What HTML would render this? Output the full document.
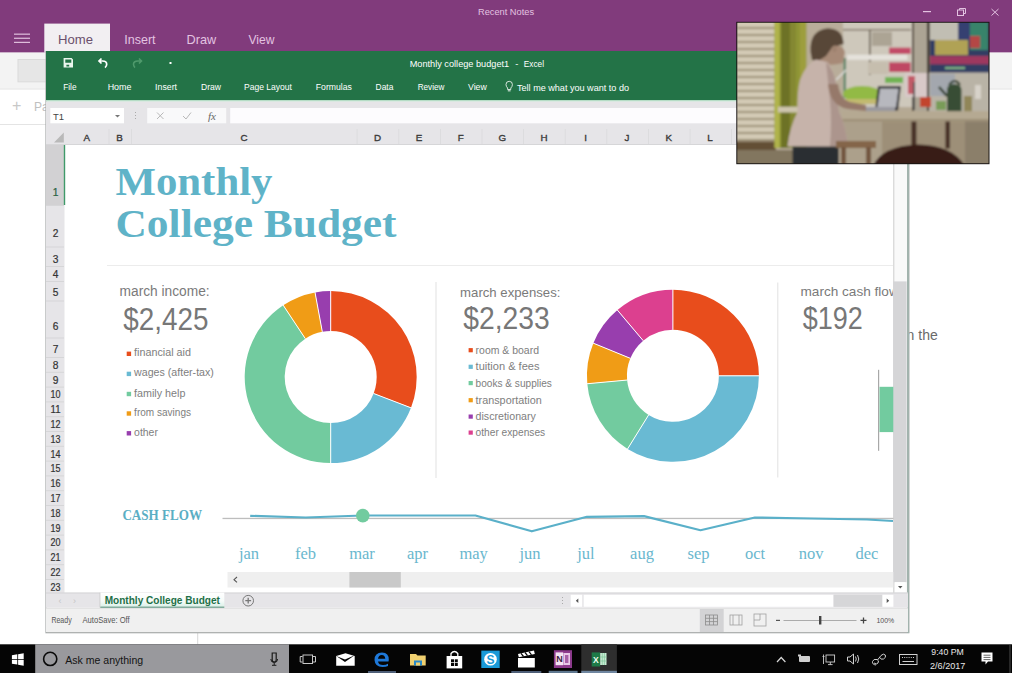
<!DOCTYPE html>
<html><head><meta charset="utf-8">
<style>
html,body{margin:0;padding:0;width:1012px;height:673px;overflow:hidden;background:#fff;}
svg{display:block;}
text{font-family:"Liberation Sans",sans-serif;}
.serif,.serif text{font-family:"Liberation Serif",serif;}
</style></head>
<body>
<svg width="1012" height="673" viewBox="0 0 1012 673">
<defs>
  <filter id="blur1" x="-5%" y="-5%" width="110%" height="110%"><feGaussianBlur stdDeviation="1.0"/></filter>
  <linearGradient id="tabgrad" x1="0" y1="0" x2="0" y2="1"><stop offset="0" stop-color="#ffffff"/><stop offset="0.55" stop-color="#f6fbf9"/><stop offset="1" stop-color="#d6efe5"/></linearGradient>
  <filter id="soft" x="-5%" y="-5%" width="110%" height="110%"><feGaussianBlur stdDeviation="0.4"/></filter>
</defs>

<!-- ===== OneNote background ===== -->
<rect x="0" y="0" width="1012" height="673" fill="#ffffff"/>
<rect x="0" y="0" width="1012" height="52.6" fill="#813b7c"/>
<text x="478" y="15.3" font-size="9.6" fill="#e3c3e1" textLength="56" lengthAdjust="spacingAndGlyphs">Recent Notes</text>
<!-- window controls -->
<rect x="923" y="11" width="8" height="1.2" fill="#e3c3e1"/>
<g fill="none" stroke="#e3c3e1" stroke-width="1">
  <rect x="957.5" y="10" width="6" height="5.5"/>
  <path d="M959.5 10 V8.5 H965.5 V13.5 H963.5"/>
  <path d="M991.5 9 L998.5 15.5 M998.5 9 L991.5 15.5"/>
</g>
<!-- hamburger -->
<g fill="#e8cce6">
  <rect x="14" y="33.6" width="16" height="1.1"/>
  <rect x="14" y="37.7" width="16" height="1.1"/>
  <rect x="14" y="41.8" width="16" height="1.1"/>
</g>
<!-- Home tab -->
<rect x="44.3" y="23.6" width="65.7" height="29" fill="#f2eff2"/>
<text x="58" y="43.6" font-size="13.5" fill="#6b4f6c" textLength="35" lengthAdjust="spacingAndGlyphs">Home</text>
<text x="124.3" y="43.6" font-size="13.5" fill="#e3c3e1" textLength="31.3" lengthAdjust="spacingAndGlyphs">Insert</text>
<text x="186.5" y="43.6" font-size="13.5" fill="#e3c3e1" textLength="29.7" lengthAdjust="spacingAndGlyphs">Draw</text>
<text x="248.5" y="43.6" font-size="13.5" fill="#e3c3e1" textLength="26" lengthAdjust="spacingAndGlyphs">View</text>

<!-- OneNote ribbon below -->
<rect x="0" y="52.6" width="1012" height="36" fill="#f3f3f3"/>
<rect x="0" y="88.5" width="1012" height="1" fill="#e2e2e2"/>
<rect x="18" y="59.5" width="40" height="22.3" fill="#e6e6e6" stroke="#dadada" stroke-width="1"/>
<text x="12" y="111" font-size="16" fill="#c8c8c8">+</text>
<text x="34" y="110.5" font-size="12" fill="#c0c0c0">Pa</text>
<rect x="0" y="124" width="46" height="1" fill="#e4e4e4"/>
<!-- OneNote page text right -->
<text x="903.5" y="339.8" font-size="14" fill="#6a6a6a">in the</text>
<rect x="197.2" y="632" width="1" height="13" fill="#d8d8d8"/>

<!-- ===== Excel window ===== -->
<g id="excel">
  <!-- shadow/border -->
  <rect x="45.4" y="51" width="864" height="582.3" fill="#a6aaa9"/>
  <rect x="907" y="51" width="2.1" height="582" fill="#a2b3ad"/>
  <rect x="46.6" y="51" width="860.4" height="581.1" fill="#ffffff"/>
  <!-- green ribbon -->
  <rect x="46" y="51" width="862" height="49" fill="#237347"/>
  <!-- QAT icons -->
  <g fill="#ffffff">
    <!-- save -->
    <path d="M63.6 58 H71.6 L73 59.4 V67.4 H63.6 Z M65.3 59.4 V62.8 H71.3 V59.4 Z M66.4 64.7 V66.4 H69.2 V64.7 Z" fill-rule="evenodd" fill="#eaf6ee"/>
  </g>
  <path d="M99 61 H102.5 Q106.7 61 106.7 64.3 Q106.7 66.3 105 67.6 M101.5 58.5 L99 61 L101.5 63.5" fill="none" stroke="#ffffff" stroke-width="1.7"/>
  <path d="M141.5 61 H138 Q133.5 61 133.5 64.3 Q133.5 66.3 135 67.6 M139 58.5 L141.5 61 L139 63.5" fill="none" stroke="#4f9a6c" stroke-width="1.6"/>
  <rect x="169.5" y="62" width="2" height="2" fill="#ffffff"/>
  <text x="409.7" y="67.2" font-size="9.2" fill="#ffffff" textLength="99.5" lengthAdjust="spacingAndGlyphs">Monthly college budget1</text><text x="515.2" y="67.2" font-size="9.2" fill="#ffffff">-</text><text x="523.8" y="67.2" font-size="9.2" fill="#ffffff" textLength="20.2" lengthAdjust="spacingAndGlyphs">Excel</text>
  <g font-size="9.2" fill="#ffffff">
    <text x="63.2" y="90" textLength="13.3" lengthAdjust="spacingAndGlyphs">File</text>
    <text x="107.7" y="90" textLength="23.7" lengthAdjust="spacingAndGlyphs">Home</text>
    <text x="155.1" y="90" textLength="21.9" lengthAdjust="spacingAndGlyphs">Insert</text>
    <text x="201" y="90" textLength="20" lengthAdjust="spacingAndGlyphs">Draw</text>
    <text x="244" y="90" textLength="48" lengthAdjust="spacingAndGlyphs">Page Layout</text>
    <text x="315.8" y="90" textLength="36.1" lengthAdjust="spacingAndGlyphs">Formulas</text>
    <text x="375.6" y="90" textLength="17.8" lengthAdjust="spacingAndGlyphs">Data</text>
    <text x="417.7" y="90" textLength="26.7" lengthAdjust="spacingAndGlyphs">Review</text>
    <text x="468" y="90" textLength="18.8" lengthAdjust="spacingAndGlyphs">View</text>
    <text x="517" y="90.5" textLength="112" lengthAdjust="spacingAndGlyphs">Tell me what you want to do</text>
  </g>
  <!-- lightbulb -->
  <path d="M507.6 88 Q506 86.5 506 84.5 A3.2 3.2 0 0 1 512.4 84.5 Q512.4 86.5 510.8 88 V89.5 H507.6 Z" fill="none" stroke="#ffffff" stroke-width="0.8"/>
  <rect x="507.8" y="90.4" width="2.8" height="0.9" fill="#fff"/>

  <!-- formula bar area -->
  <rect x="46" y="100" width="862" height="1.6" fill="#b5dcc5"/>
  <rect x="46" y="101.6" width="862" height="43" fill="#e6e5e8"/>
  <rect x="50.3" y="108" width="73.7" height="15.3" fill="#ffffff"/>
  <text x="53" y="119.8" font-size="9.5" fill="#444">T1</text>
  <path d="M115 115 H120 L117.5 117.5 Z" fill="#777"/>
  <g fill="#aaa"><rect x="135" y="112" width="1" height="1"/><rect x="135" y="115" width="1" height="1"/><rect x="135" y="118" width="1" height="1"/></g>
  <rect x="147.2" y="108" width="79" height="15.3" fill="#f9f9fa"/>
  <path d="M157 112.5 L163.5 119 M163.5 112.5 L157 119" stroke="#b8b8b8" stroke-width="1"/>
  <path d="M183 116 L186 119 L191 112.5" fill="none" stroke="#b8b8b8" stroke-width="1"/>
  <text x="208" y="119.8" font-size="11" fill="#666" class="serif" font-style="italic">fx</text>
  <rect x="230.2" y="108" width="663" height="15.3" fill="#fdfcfe"/>

  <!-- column header row -->
  <rect x="46" y="144" width="847" height="1" fill="#d6d6d8"/>
  <path d="M54 142.4 L63.8 132.6 V142.4 Z" fill="#b9b9b9"/>
  <g fill="#dcdcde">
    <rect x="108.5" y="129" width="1" height="15"/>
    <rect x="131" y="129" width="1" height="15"/>
    <rect x="356.6" y="129" width="1" height="15"/>
    <rect x="398.3" y="129" width="1" height="15"/>
    <rect x="440" y="129" width="1" height="15"/>
    <rect x="481.5" y="129" width="1" height="15"/>
    <rect x="523" y="129" width="1" height="15"/>
    <rect x="564.7" y="129" width="1" height="15"/>
    <rect x="606.3" y="129" width="1" height="15"/>
    <rect x="648" y="129" width="1" height="15"/>
    <rect x="689.6" y="129" width="1" height="15"/>
    <rect x="731" y="129" width="1" height="15"/>
  </g>
  <g font-size="9.8" fill="#3a3a3a" stroke="#3a3a3a" stroke-width="0.35" text-anchor="middle">
    <text x="86.8" y="141.4">A</text>
    <text x="119.6" y="141.4">B</text>
    <text x="244" y="141.4">C</text>
    <text x="377.5" y="141.4">D</text>
    <text x="419" y="141.4">E</text>
    <text x="460.8" y="141.4">F</text>
    <text x="502.3" y="141.4">G</text>
    <text x="544" y="141.4">H</text>
    <text x="585.5" y="141.4">I</text>
    <text x="627" y="141.4">J</text>
    <text x="668.8" y="141.4">K</text>
    <text x="710" y="141.4">L</text>
  </g>

  <!-- row headers -->
  <rect x="46" y="145" width="18.5" height="448" fill="#e6e5e8"/>
  <rect x="46" y="145" width="18.5" height="60" fill="#d2d1d3"/>
  <rect x="63.8" y="145" width="1.4" height="60" fill="#3f9a6a"/>
  <g fill="#d6d6d8">
    <rect x="46" y="205.0" width="18" height="1"/>
    <rect x="46" y="246.5" width="18" height="1"/>
    <rect x="46" y="266.0" width="18" height="1"/>
    <rect x="46" y="281.0" width="18" height="1"/>
    <rect x="46" y="300.5" width="18" height="1"/>
    <rect x="46" y="337.5" width="18" height="1"/>
    <rect x="46" y="357.0" width="18" height="1"/>
    <rect x="46" y="371.8" width="18" height="1"/>
    <rect x="46" y="386.6" width="18" height="1"/>
    <rect x="46" y="401.4" width="18" height="1"/>
    <rect x="46" y="416.2" width="18" height="1"/>
    <rect x="46" y="431.0" width="18" height="1"/>
    <rect x="46" y="445.8" width="18" height="1"/>
    <rect x="46" y="460.6" width="18" height="1"/>
    <rect x="46" y="475.4" width="18" height="1"/>
    <rect x="46" y="490.2" width="18" height="1"/>
    <rect x="46" y="505.0" width="18" height="1"/>
    <rect x="46" y="519.8" width="18" height="1"/>
    <rect x="46" y="534.6" width="18" height="1"/>
    <rect x="46" y="549.4" width="18" height="1"/>
    <rect x="46" y="564.2" width="18" height="1"/>
    <rect x="46" y="579.0" width="18" height="1"/>
  </g>
  <g font-size="10.2" fill="#333333" stroke="#333333" stroke-width="0.2" text-anchor="middle">
    <text x="55.5" y="196.2" fill="#217346">1</text>
    <text x="55.5" y="237.2">2</text>
    <text x="55.5" y="263.2">3</text>
    <text x="55.5" y="278.3">4</text>
    <text x="55.5" y="295.6">5</text>
    <text x="55.5" y="330.0">6</text>
    <text x="55.5" y="353.2">7</text>
    <text x="55.5" y="368.8">8</text>
    <text x="55.5" y="383.6">9</text>
    <text x="55.5" y="398.4" textLength="10" lengthAdjust="spacingAndGlyphs">10</text>
    <text x="55.5" y="413.2" textLength="10" lengthAdjust="spacingAndGlyphs">11</text>
    <text x="55.5" y="428.0" textLength="10" lengthAdjust="spacingAndGlyphs">12</text>
    <text x="55.5" y="442.8" textLength="10" lengthAdjust="spacingAndGlyphs">13</text>
    <text x="55.5" y="457.6" textLength="10" lengthAdjust="spacingAndGlyphs">14</text>
    <text x="55.5" y="472.4" textLength="10" lengthAdjust="spacingAndGlyphs">15</text>
    <text x="55.5" y="487.2" textLength="10" lengthAdjust="spacingAndGlyphs">16</text>
    <text x="55.5" y="502.0" textLength="10" lengthAdjust="spacingAndGlyphs">17</text>
    <text x="55.5" y="516.8" textLength="10" lengthAdjust="spacingAndGlyphs">18</text>
    <text x="55.5" y="531.6" textLength="10" lengthAdjust="spacingAndGlyphs">19</text>
    <text x="55.5" y="546.4" textLength="10" lengthAdjust="spacingAndGlyphs">20</text>
    <text x="55.5" y="561.2" textLength="10" lengthAdjust="spacingAndGlyphs">21</text>
    <text x="55.5" y="576.0" textLength="10" lengthAdjust="spacingAndGlyphs">22</text>
    <text x="55.5" y="590.8" textLength="10" lengthAdjust="spacingAndGlyphs">23</text>
  </g>

  <!-- vertical scrollbar -->
  <rect x="893.3" y="145" width="13.7" height="448" fill="#f9f9f9"/>
  <rect x="893.3" y="145" width="1" height="448" fill="#cdcdcd"/>
  <rect x="893.3" y="281.4" width="13.3" height="300.8" fill="#d5d5d7"/>
  <rect x="895" y="582.2" width="10.6" height="10.2" fill="#ffffff"/>
  <path d="M898 586 H902.5 L900.25 588.5 Z" fill="#555"/>

  <!-- sheet tab bar -->
  <rect x="46" y="592.6" width="862" height="15.2" fill="#e6e5e8"/>
  <rect x="46" y="592.6" width="862" height="0.8" fill="#cfcfd1"/>
  <text x="58.5" y="603.5" font-size="9" fill="#c4c4c4">‹</text>
  <text x="73" y="603.5" font-size="9" fill="#c4c4c4">›</text>
  <rect x="100.2" y="592.6" width="124.1" height="15.2" fill="url(#tabgrad)"/>
  <rect x="100.2" y="606.6" width="124.1" height="1.2" fill="#6e9c8a"/>
  <rect x="99.6" y="592.6" width="0.7" height="15" fill="#c8c8c8"/>
  <text x="104.7" y="603.5" font-size="10" font-weight="bold" fill="#1f6f47" textLength="115.2" lengthAdjust="spacingAndGlyphs">Monthly College Budget</text>
  <circle cx="248.2" cy="600.7" r="5.3" fill="none" stroke="#777" stroke-width="1"/>
  <path d="M245.3 600.7 H251.1 M248.2 597.8 V603.6" stroke="#777" stroke-width="1.3"/>
  <g fill="#aaa"><rect x="562" y="597" width="1" height="1"/><rect x="562" y="600" width="1" height="1"/><rect x="562" y="603" width="1" height="1"/></g>
  <rect x="570.7" y="594.8" width="11.5" height="12" fill="#ffffff"/>
  <path d="M578.3 598.4 V603 L575.8 600.7 Z" fill="#555"/>
  <rect x="583.7" y="594.8" width="250" height="12" fill="#ffffff"/>
  <rect x="833.5" y="594.8" width="49" height="12" fill="#d6d6d8"/>
  <rect x="882.4" y="594.8" width="11" height="12" fill="#ffffff"/>
  <path d="M886.7 598.4 V603 L889.2 600.7 Z" fill="#555"/>

  <!-- status bar -->
  <rect x="46" y="608" width="862" height="24" fill="#f0f0f0"/>
  <rect x="46" y="608" width="862" height="0.8" fill="#e0e0e0"/>
  <text x="51.4" y="623" font-size="8.4" fill="#555" textLength="20.3" lengthAdjust="spacingAndGlyphs">Ready</text>
  <text x="82.5" y="623" font-size="8.4" fill="#555" textLength="47.2" lengthAdjust="spacingAndGlyphs">AutoSave: Off</text>
  <rect x="699.8" y="609" width="23.9" height="23" fill="#d3d3d5"/>
  <g fill="none" stroke="#8c8c8c" stroke-width="0.8">
    <rect x="705.5" y="615" width="12" height="10"/>
    <path d="M705.5 618.3 H717.5 M705.5 621.6 H717.5 M709.5 615 V625 M713.5 615 V625"/>
    <rect x="730" y="615" width="12" height="10" stroke="#a0a0a0"/>
    <path d="M733 615 V625 M739 615 V625" stroke="#a0a0a0"/>
    <rect x="754" y="614" width="12" height="12" stroke="#a0a0a0"/>
    <path d="M760 614 V620 H754" stroke="#a0a0a0"/>
  </g>
  <rect x="776" y="619.8" width="4" height="1.2" fill="#555"/>
  <rect x="783.5" y="620" width="73" height="0.8" fill="#9a9a9a"/>
  <rect x="819" y="616" width="2.4" height="8.5" fill="#444"/>
  <path d="M860.5 620.4 H866.5 M863.5 617.4 V623.4" stroke="#444" stroke-width="1.3"/>
  <text x="876.5" y="623.3" font-size="7.8" fill="#555" textLength="17.8" lengthAdjust="spacingAndGlyphs">100%</text>

  <!-- ===== sheet content ===== -->
  <!-- title -->
  <text class="serif" x="115.5" y="195.2" font-size="41" font-weight="bold" fill="#5fb3c8" textLength="157" lengthAdjust="spacingAndGlyphs">Monthly</text>
  <text class="serif" x="115.5" y="237" font-size="41" font-weight="bold" fill="#5fb3c8" textLength="281" lengthAdjust="spacingAndGlyphs">College Budget</text>
  <rect x="107" y="265" width="786" height="1" fill="#ececec"/>

  <!-- income -->
  <text x="119.6" y="295.7" font-size="13.8" fill="#7a7a7a" textLength="90" lengthAdjust="spacingAndGlyphs">march income:</text>
  <text x="123.2" y="329.6" font-size="31" fill="#777777" textLength="85.2" lengthAdjust="spacingAndGlyphs">$2,425</text>
  <g font-size="10.8" fill="#7e7e7e">
    <rect x="126.7" y="351.6" width="4.4" height="4.4" fill="#e84d1c"/>
    <text x="134.1" y="356.3" textLength="56.9" lengthAdjust="spacingAndGlyphs">financial aid</text>
    <rect x="126.7" y="371.7" width="4.4" height="4.4" fill="#69bad3"/>
    <text x="134.1" y="376.4" textLength="79.8" lengthAdjust="spacingAndGlyphs">wages (after-tax)</text>
    <rect x="126.7" y="391.8" width="4.4" height="4.4" fill="#72cb9f"/>
    <text x="134.1" y="396.5" textLength="51.3" lengthAdjust="spacingAndGlyphs">family help</text>
    <rect x="126.7" y="411.3" width="4.4" height="4.4" fill="#f09c16"/>
    <text x="134.1" y="416" textLength="56.9" lengthAdjust="spacingAndGlyphs">from savings</text>
    <rect x="126.7" y="431.1" width="4.4" height="4.4" fill="#983eae"/>
    <text x="134.1" y="435.8" textLength="23.8" lengthAdjust="spacingAndGlyphs">other</text>
  </g>
  <g id="donut1" transform="translate(330.7 377)">
<path d="M0.00 -86.00 A86 86 0 0 1 80.29 30.82 L42.94 16.48 A46 46 0 0 0 0.00 -46.00 Z" fill="#e84d1c"/>
<path d="M80.29 30.82 A86 86 0 0 1 0.00 86.00 L0.00 46.00 A46 46 0 0 0 42.94 16.48 Z" fill="#69bad3"/>
<path d="M0.00 86.00 A86 86 0 0 1 -47.47 -71.71 L-25.39 -38.36 A46 46 0 0 0 0.00 46.00 Z" fill="#72cb9f"/>
<path d="M-47.47 -71.71 A86 86 0 0 1 -15.67 -84.56 L-8.38 -45.23 A46 46 0 0 0 -25.39 -38.36 Z" fill="#f09c16"/>
<path d="M-15.67 -84.56 A86 86 0 0 1 -0.00 -86.00 L-0.00 -46.00 A46 46 0 0 0 -8.38 -45.23 Z" fill="#983eae"/>
<line x1="0.00" y1="-46.00" x2="0.00" y2="-87.00" stroke="#ffffff" stroke-width="1"/>
<line x1="42.94" y1="16.48" x2="81.22" y2="31.18" stroke="#ffffff" stroke-width="1"/>
<line x1="0.00" y1="46.00" x2="0.00" y2="87.00" stroke="#ffffff" stroke-width="1"/>
<line x1="-25.39" y1="-38.36" x2="-48.02" y2="-72.55" stroke="#ffffff" stroke-width="1"/>
<line x1="-8.38" y1="-45.23" x2="-15.85" y2="-85.54" stroke="#ffffff" stroke-width="1"/>
</g>
  <rect x="435.5" y="282" width="1" height="196" fill="#e2e2e2"/>

  <!-- expenses -->
  <text x="460.1" y="296.7" font-size="13.6" fill="#7a7a7a" textLength="100.3" lengthAdjust="spacingAndGlyphs">march expenses:</text>
  <text x="463.2" y="329.4" font-size="31" fill="#777777" textLength="86.5" lengthAdjust="spacingAndGlyphs">$2,233</text>
  <g font-size="10.2" fill="#7e7e7e">
    <rect x="468.6" y="348.1" width="4.2" height="4.2" fill="#e84d1c"/>
    <text x="475.6" y="353.8" textLength="63.4" lengthAdjust="spacingAndGlyphs">room &amp; board</text>
    <rect x="468.6" y="364.7" width="4.2" height="4.2" fill="#69bad3"/>
    <text x="475.6" y="370.4" textLength="63.9" lengthAdjust="spacingAndGlyphs">tuition &amp; fees</text>
    <rect x="468.6" y="381.0" width="4.2" height="4.2" fill="#72cb9f"/>
    <text x="475.6" y="386.7" textLength="76.3" lengthAdjust="spacingAndGlyphs">books &amp; supplies</text>
    <rect x="468.6" y="398.1" width="4.2" height="4.2" fill="#f09c16"/>
    <text x="475.6" y="403.8" textLength="66.1" lengthAdjust="spacingAndGlyphs">transportation</text>
    <rect x="468.6" y="414.5" width="4.2" height="4.2" fill="#983eae"/>
    <text x="475.6" y="420.2" textLength="60.2" lengthAdjust="spacingAndGlyphs">discretionary</text>
    <rect x="468.6" y="430.5" width="4.2" height="4.2" fill="#dc408f"/>
    <text x="475.6" y="436.2" textLength="69.6" lengthAdjust="spacingAndGlyphs">other expenses</text>
  </g>
  <g id="donut2" transform="translate(672.9 375.8)">
<path d="M0.00 -86.00 A86 86 0 0 1 86.00 -0.00 L46.00 -0.00 A46 46 0 0 0 0.00 -46.00 Z" fill="#e84d1c"/>
<path d="M86.00 -0.00 A86 86 0 0 1 -45.32 73.09 L-24.24 39.10 A46 46 0 0 0 46.00 -0.00 Z" fill="#69bad3"/>
<path d="M-45.32 73.09 A86 86 0 0 1 -85.63 7.94 L-45.80 4.25 A46 46 0 0 0 -24.24 39.10 Z" fill="#72cb9f"/>
<path d="M-85.63 7.94 A86 86 0 0 1 -79.57 -32.63 L-42.56 -17.45 A46 46 0 0 0 -45.80 4.25 Z" fill="#f09c16"/>
<path d="M-79.57 -32.63 A86 86 0 0 1 -55.51 -65.69 L-29.69 -35.13 A46 46 0 0 0 -42.56 -17.45 Z" fill="#983eae"/>
<path d="M-55.51 -65.69 A86 86 0 0 1 -0.00 -86.00 L-0.00 -46.00 A46 46 0 0 0 -29.69 -35.13 Z" fill="#dc408f"/>
<line x1="0.00" y1="-46.00" x2="0.00" y2="-87.00" stroke="#ffffff" stroke-width="1"/>
<line x1="46.00" y1="-0.00" x2="87.00" y2="-0.00" stroke="#ffffff" stroke-width="1"/>
<line x1="-24.24" y1="39.10" x2="-45.85" y2="73.94" stroke="#ffffff" stroke-width="1"/>
<line x1="-45.80" y1="4.25" x2="-86.63" y2="8.04" stroke="#ffffff" stroke-width="1"/>
<line x1="-42.56" y1="-17.45" x2="-80.49" y2="-33.01" stroke="#ffffff" stroke-width="1"/>
<line x1="-29.69" y1="-35.13" x2="-56.15" y2="-66.45" stroke="#ffffff" stroke-width="1"/>
</g>
  <rect x="777.3" y="282.5" width="1" height="195" fill="#e2e2e2"/>

  <!-- cash flow -->
  <svg x="0" y="0" width="893" height="673" overflow="hidden">
    <text x="800.5" y="295.6" font-size="13.6" fill="#7a7a7a">march cash flow</text>
  </svg>
  <text x="802.8" y="329.2" font-size="31" fill="#777777" textLength="60.1" lengthAdjust="spacingAndGlyphs">$192</text>
  <rect x="878" y="369.8" width="1.2" height="81" fill="#a8a8a8"/>
  <rect x="879.5" y="386.8" width="13.8" height="45.3" fill="#72cb9f"/>

  <!-- cash flow line chart -->
  <text class="serif" x="122.4" y="519.8" font-size="15.5" font-weight="bold" fill="#5aaec4" textLength="79.6" lengthAdjust="spacingAndGlyphs">CASH FLOW</text>
  <rect x="222.5" y="517.8" width="671" height="1.3" fill="#bdbdbd"/>
  <polyline points="250.2,515.8 305.7,517.5 362.8,515.5 418.5,515.5 475.4,515.5 531.8,531.3 586.9,516.8 644,516.1 700.5,530.2 754.9,517.5 811,518.5 867,519.5 893,521" fill="none" stroke="#5ab0c9" stroke-width="2.2" stroke-linejoin="round"/>
  <circle cx="362.8" cy="515.6" r="6.8" fill="#72cb9f"/>
  <g class="serif" font-size="16.5" fill="#6ab7ce" text-anchor="middle">
    <text x="249" y="558.5">jan</text>
    <text x="305.5" y="558.5">feb</text>
    <text x="362" y="558.5">mar</text>
    <text x="417.6" y="558.5">apr</text>
    <text x="473.6" y="558.5">may</text>
    <text x="530" y="558.5">jun</text>
    <text x="586" y="558.5">jul</text>
    <text x="642" y="558.5">aug</text>
    <text x="698.5" y="558.5">sep</text>
    <text x="755" y="558.5">oct</text>
    <text x="811" y="558.5">nov</text>
    <text x="867" y="558.5">dec</text>
  </g>
  <rect x="227.5" y="572" width="665.8" height="15.5" fill="#efefef"/>
  <rect x="349.4" y="572" width="51.4" height="15.5" fill="#c9c9c9"/>
  <path d="M237 577 L234 579.7 L237 582.4" fill="none" stroke="#555" stroke-width="1.1"/>
</g>

<!-- ===== video overlay ===== -->
<g id="video">
  <clipPath id="vclip"><rect x="737.3" y="22.8" width="251.2" height="140.4"/></clipPath>
  <rect x="736.3" y="21.8" width="253.2" height="142.4" fill="#161210"/>
  <g clip-path="url(#vclip)">
   <g filter="url(#blur1)">
    <rect x="730" y="15" width="270" height="160" fill="#c2b6a0"/>
    <!-- blinds -->
    <rect x="730" y="15" width="45" height="127" fill="#e2d9c4"/>
    <g fill="#a89c82"><rect x="737" y="27.0" width="38" height="2" /><rect x="737" y="34.0" width="38" height="2" /><rect x="737" y="41.0" width="38" height="2" /><rect x="737" y="48.0" width="38" height="2" /><rect x="737" y="55.0" width="38" height="2" /><rect x="737" y="62.0" width="38" height="2" /><rect x="737" y="69.0" width="38" height="2" /><rect x="737" y="76.0" width="38" height="2" /><rect x="737" y="83.0" width="38" height="2" /><rect x="737" y="90.0" width="38" height="2" /><rect x="737" y="97.0" width="38" height="2" /><rect x="737" y="104.0" width="38" height="2" /><rect x="737" y="111.0" width="38" height="2" /><rect x="737" y="118.0" width="38" height="2" /><rect x="737" y="125.0" width="38" height="2" /><rect x="737" y="132.0" width="38" height="2" /><rect x="737" y="139.0" width="38" height="2" /></g>
    <rect x="730" y="141.4" width="46" height="9" fill="#6a5438"/>
    <rect x="730" y="150" width="70" height="20" fill="#8a7e66"/>
    <!-- curtain -->
    <rect x="774.5" y="15" width="32" height="133" fill="#98a03a"/>
    <rect x="774.5" y="15" width="5" height="133" fill="#bcc252"/>
    <rect x="781" y="15" width="9" height="133" fill="#737a2a"/>
    <rect x="790" y="15" width="6" height="133" fill="#8c9234"/>
    <rect x="800" y="15" width="6.6" height="133" fill="#a8aa40"/>
    <!-- wall behind woman -->
    <rect x="806.6" y="15" width="42" height="92" fill="#c6baa6"/>
    <!-- shelves area -->
    <rect x="843" y="15" width="70" height="92" fill="#ddd7ca"/>
    <rect x="869" y="30" width="1.6" height="45" fill="#6a6050"/>
    <rect x="843" y="29" width="68" height="1.5" fill="#8a8070"/>
    <rect x="872" y="32" width="20" height="14" fill="#b8b0a0"/>
    <rect x="889" y="47.6" width="21.7" height="6.4" fill="#d05070"/>
    <rect x="889" y="62.4" width="21.7" height="9.6" fill="#cc4a6c"/>
    <rect x="868" y="62" width="20" height="12" fill="#d4ccbc"/>
    <rect x="847" y="54.7" width="60.5" height="5.1" fill="#f6f4ee"/>
    <rect x="843.5" y="58" width="2.4" height="40" fill="#5a8a68"/>
    <path d="M836 80 L846 70" stroke="#f0f0f0" stroke-width="1.5"/>
    <rect x="885" y="77" width="18" height="6" fill="#78c058"/>
    <!-- frame lines & gap -->
    <rect x="912.7" y="15" width="15.3" height="96" fill="#b8b0a0"/>
    <rect x="912" y="15" width="1.8" height="96" fill="#4a3c30"/>
    <rect x="927" y="15" width="2.5" height="96" fill="#2a2420"/>
    <rect x="905" y="73" width="22" height="24" fill="#e8d8d8"/>
    <rect x="908" y="76" width="7" height="18" fill="#d06070"/>
    <!-- poster -->
    <rect x="930" y="15" width="60" height="57.7" fill="#34406c"/>
    <rect x="930" y="15" width="28" height="25" fill="#cfcdc2"/>
    <rect x="958" y="22" width="12" height="18" fill="#36447a"/>
    <rect x="970" y="22" width="18" height="28" fill="#3a8c74"/>
    <rect x="970" y="36" width="10" height="12" fill="#c04a4a"/>
    <rect x="935" y="40" width="33" height="15" fill="#bcae5c"/>
    <rect x="930" y="56" width="60" height="8.3" fill="#a83c66"/>
    <rect x="945" y="67" width="20" height="2" fill="#8ac090"/>
    <!-- wall right lower -->
    <rect x="929" y="72.7" width="61" height="39" fill="#c6c0b4"/>
    <rect x="930" y="74" width="25" height="22" fill="#aeb4bc"/>
    <rect x="975" y="85" width="6" height="14" fill="#e6e2da"/>
    <!-- plants -->
    <ellipse cx="862" cy="94" rx="19" ry="8" fill="#9cc84a"/>
    <rect x="843" y="99" width="36" height="5" fill="#d0c878"/>
    <!-- laptop -->
    <path d="M878 86 L901 86 L898 110.5 L875 110.5 Z" fill="#30323a"/>
    <path d="M880 88.5 L898.5 88.5 L896 107.5 L877.5 107.5 Z" fill="#c4c6ce"/>
    <rect x="865" y="107" width="30" height="5" fill="#a4a4ac"/>
    <!-- lamp / pot -->
    <rect x="913" y="82" width="2" height="28" fill="#5a5a5a"/>
    <rect x="920" y="97" width="11" height="10" fill="#d04830"/>
    <!-- watering can -->
    <path d="M947 90 Q947 84 954 84 Q961.5 84 961.5 90 V113.6 H947 Z" fill="#3a5238"/>
    <path d="M949 85 Q955 77 960 85" fill="none" stroke="#2e3e2c" stroke-width="2"/>
    <path d="M947 96 L939 87" stroke="#2e3e2c" stroke-width="2.5"/>
    <rect x="936" y="101" width="10" height="9" fill="#80a860"/>
    <rect x="964" y="96" width="8" height="17" fill="#9a9060"/>
    <!-- table -->
    <rect x="778" y="106.7" width="26" height="5.8" fill="#ddd4bc"/>
    <rect x="842" y="111.2" width="148" height="10.3" fill="#c2b69e"/>
    <rect x="842" y="119" width="148" height="2.5" fill="#a89a80"/>
    <!-- below table -->
    <rect x="842" y="121.5" width="148" height="45" fill="#a89a82"/>
    <rect x="842" y="121.5" width="40" height="45" fill="#b8ac96"/>
    <rect x="911.4" y="121.5" width="5" height="27" fill="#4a3428"/>
    <rect x="945.4" y="121.5" width="4.6" height="27" fill="#4a3428"/>
    <rect x="965" y="121.5" width="25" height="45" fill="#948872"/>
    <!-- woman hair/head -->
    <path d="M815 54 Q822 45 834 45 Q844 46 845 52 L843 63 Q832 66 826 64 L815 62 Z" fill="#b29480"/>
    <path d="M810.5 52 Q809 30 828 28.2 Q843.5 29 843.5 44 L837 46 Q833 44 831 49 L826 56 L818 61 L812 60 Z" fill="#5e4a3c"/>
    <ellipse cx="834.5" cy="49" rx="2" ry="3" fill="#a88a76"/>
    <!-- blouse -->
    <path d="M800 80 Q806 64 816 59.5 L827.5 62 Q834 70 836 84 L839 112 Q846 126 848 146.5 L787.4 146.5 Q790 126 797.5 112 Q797 92 800 80 Z" fill="#d4c0b8"/>
    <path d="M826 62 Q834 70 836 84 L839 112 Q846 126 848 146.5 L830 146.5 Q832 120 830 100 Z" fill="#b8a098"/>
    <!-- arm -->
    <path d="M828 84 Q830 106 848 109 L866 111 L866 105 L850 102 Q840 99 838 84 Z" fill="#a08272"/>
    <!-- pants -->
    <rect x="792.5" y="146.5" width="46.3" height="20" fill="#2c3036"/>
    <!-- stool -->
    <rect x="836" y="141" width="40" height="7" fill="#8c6c50"/>
    <rect x="841" y="147" width="5" height="20" fill="#7a5c44"/>
    <rect x="866" y="147" width="5" height="20" fill="#7a5c44"/>
    <!-- chair back -->
    <path d="M873 166 Q882 146 918 144.6 Q952 145 965 166 Z" fill="#3a1e1a"/>
    <rect x="730" y="15" width="270" height="160" fill="#281c10" opacity="0.08"/>
   </g>
  </g>
</g>

<!-- ===== taskbar ===== -->
<g id="taskbar">
  <rect x="0" y="644.3" width="1012" height="28.7" fill="#050505"/>
  <!-- windows logo -->
  <path d="M11.9 655.2 L17.3 654.3 V659 H11.9 Z M18.1 654.2 L23.7 653.2 V659 H18.1 Z M11.9 659.8 H17.3 V664.6 L11.9 663.8 Z M18.1 659.8 H23.7 V665.7 L18.1 664.7 Z" fill="#ffffff"/>
  <!-- search box -->
  <rect x="35.2" y="644.3" width="253.8" height="28.7" fill="#99999d"/>
  <circle cx="50.2" cy="658.9" r="6.6" fill="none" stroke="#0a0a0a" stroke-width="1.6"/>
  <text x="65.2" y="663.5" font-size="10.6" fill="#141414" textLength="78" lengthAdjust="spacingAndGlyphs">Ask me anything</text>
  <!-- mic -->
  <path d="M272.2 653 h4 v7 a2 2 0 0 1 -4 0 Z" fill="none" stroke="#1a1a1a" stroke-width="1.2"/>
  <path d="M270.8 659 a3.4 3.4 0 0 0 6.8 0 M274.2 662.6 V665 M272 665.3 H276.4" fill="none" stroke="#1a1a1a" stroke-width="1"/>
  <!-- task view -->
  <g fill="none" stroke="#c8c8c8" stroke-width="1">
    <rect x="303" y="655" width="9.5" height="8.5"/>
    <path d="M302.5 656.5 H300.2 V662 H302.5 M313 656.5 H315.5 V662 H313"/>
  </g>
  <!-- mail -->
  <path d="M336.2 656 L345.5 653.2 L354.7 656 V665.8 H336.2 Z" fill="#ffffff"/>
  <path d="M336.2 656 L345 662 L354.7 655.3 L345 659.5 Z" fill="#050505"/>
  <!-- edge -->
  <path d="M388.5 661.5 H378 Q378.5 665 383 665 Q386 665 388 663.8 V666 Q386 667 382.5 667 Q375 667 374.5 660 Q374.5 652.5 382 652.5 Q389 652.5 388.8 660 Z M378 658.8 H385.3 Q385 655 381.8 655 Q378.5 655 378 658.8 Z" fill="#1e78d8" fill-rule="evenodd"/>
  <rect x="368" y="671" width="28" height="2" fill="#4e5f78"/>
  <!-- explorer -->
  <path d="M410 654 H416 L417.5 655.5 H425.7 V665.5 H410 Z" fill="#f0d070"/>
  <rect x="414" y="660.5" width="8" height="5" fill="#2a8ac8"/>
  <rect x="416" y="662.5" width="4" height="3" fill="#f0d070"/>
  <!-- store -->
  <path d="M446.6 656 H462.2 V668.4 H446.6 Z" fill="#ffffff"/>
  <path d="M451 656 V653.5 Q454.4 649.5 457.8 653.5 V656" fill="none" stroke="#ffffff" stroke-width="1.3"/>
  <g fill="#050505"><rect x="451" y="659.3" width="3" height="3"/><rect x="454.8" y="659.3" width="3" height="3"/><rect x="451" y="663" width="3" height="3"/><rect x="454.8" y="663" width="3" height="3"/></g>
  <!-- skype -->
  <rect x="481.3" y="650.6" width="18.4" height="17.4" fill="#1a9ad8"/>
  <circle cx="490.5" cy="659.3" r="6.3" fill="#ffffff"/>
  <text x="490.5" y="663.8" font-size="12" font-weight="bold" fill="#1a9ad8" text-anchor="middle">S</text>
  <!-- films -->
  <path d="M518 658 H534.8 V667.5 H518 Z" fill="#ffffff"/>
  <path d="M518 654 L534 650.6 L534.8 654 L518.8 657.3 Z" fill="#ffffff"/>
  <path d="M521 653.4 L523.5 656.5 M525 652.5 L527.5 655.6 M529 651.7 L531.5 654.8" stroke="#050505" stroke-width="1.2"/>
  <rect x="511.3" y="671" width="30" height="2" fill="#4e5f78"/>
  <!-- onenote -->
  <rect x="553.9" y="650.2" width="18.1" height="17.8" fill="#8c3a8c"/>
  <rect x="555.6" y="652.4" width="7.6" height="12.8" fill="#f4e4f4"/>
  <text x="559.4" y="662.4" font-size="9" font-weight="bold" fill="#402040" text-anchor="middle">N</text>
  <rect x="563.4" y="653" width="6.6" height="12" fill="#e8c8e8"/>
  <rect x="565" y="655" width="3.4" height="8" fill="#a860a8"/>
  <rect x="548.7" y="670.8" width="28.9" height="2.2" fill="#5f7890"/>
  <!-- excel -->
  <rect x="581.3" y="644.3" width="35.6" height="28.7" fill="#2e2e2e"/>
  <rect x="591.7" y="652.4" width="8.5" height="14.1" fill="#1e7a48"/>
  <text x="595.9" y="662.6" font-size="8.6" font-weight="bold" fill="#f0fff4" text-anchor="middle">X</text>
  <rect x="600.2" y="653" width="6.3" height="12" fill="#c8ecd4"/>
  <path d="M602.3 653 V665 M604.4 653 V665 M600.2 657 H606.5 M600.2 661 H606.5" stroke="#7fc499" stroke-width="0.7"/>
  <rect x="581.3" y="670.8" width="35.6" height="2.2" fill="#6f86a0"/>
  <!-- tray -->
  <path d="M777 662 L781.2 657.5 L785.4 662" fill="none" stroke="#d8d8d8" stroke-width="1.2"/>
  <g fill="#d0d0d0">
    <rect x="799" y="656" width="11" height="6" rx="1"/>
    <rect x="798" y="654.5" width="3" height="2"/>
  </g>
  <g fill="none" stroke="#d0d0d0" stroke-width="1">
    <rect x="826" y="655" width="8.6" height="7" stroke-width="0.9"/>
    <path d="M830.3 662 V664.6 M828 664.6 H832.6 M823.5 654.5 V664 M822.5 656.5 H824.5" stroke-width="0.9"/>
    <path d="M847.5 657 H850 L853.5 654 V664 L850 661 H847.5 Z"/>
    <path d="M855.5 656.5 Q857 659 855.5 661.5 M857.5 655 Q860 659 857.5 663"/>
    <path d="M876 665 Q872 664.5 872.5 661.5 Q873.5 658.5 877 659.5 Q879.5 660.5 878 663 Q876.5 665 874 663 M877.5 660 L881 655.5 Q883.5 653 885.3 655 Q886.5 657.5 883.5 659 Q880.5 660 880 657.5"/>
    <rect x="899.5" y="654.5" width="17.5" height="10"/>
    <path d="M902.5 661.5 H914"/>
    <path d="M902 657.5 H915" stroke-dasharray="1 1.2"/>
  </g>
  <text x="947.5" y="655.4" font-size="9.2" fill="#e8e8e8" text-anchor="middle" textLength="32.4" lengthAdjust="spacingAndGlyphs">9:40 PM</text>
  <text x="947.7" y="668.6" font-size="9.2" fill="#e8e8e8" text-anchor="middle" textLength="35.4" lengthAdjust="spacingAndGlyphs">2/6/2017</text>
  <path d="M981.5 652.5 H992.5 V661.5 H988 L985.5 664.5 V661.5 H981.5 Z" fill="#ffffff"/>
  <path d="M983.5 655.2 H990.5 M983.5 657.4 H990.5 M983.5 659.6 H990.5" stroke="#555555" stroke-width="0.9"/>
  <rect x="1009.5" y="644.3" width="1" height="28.7" fill="#4a4a4a"/>
</g>
</svg>
</body></html>
